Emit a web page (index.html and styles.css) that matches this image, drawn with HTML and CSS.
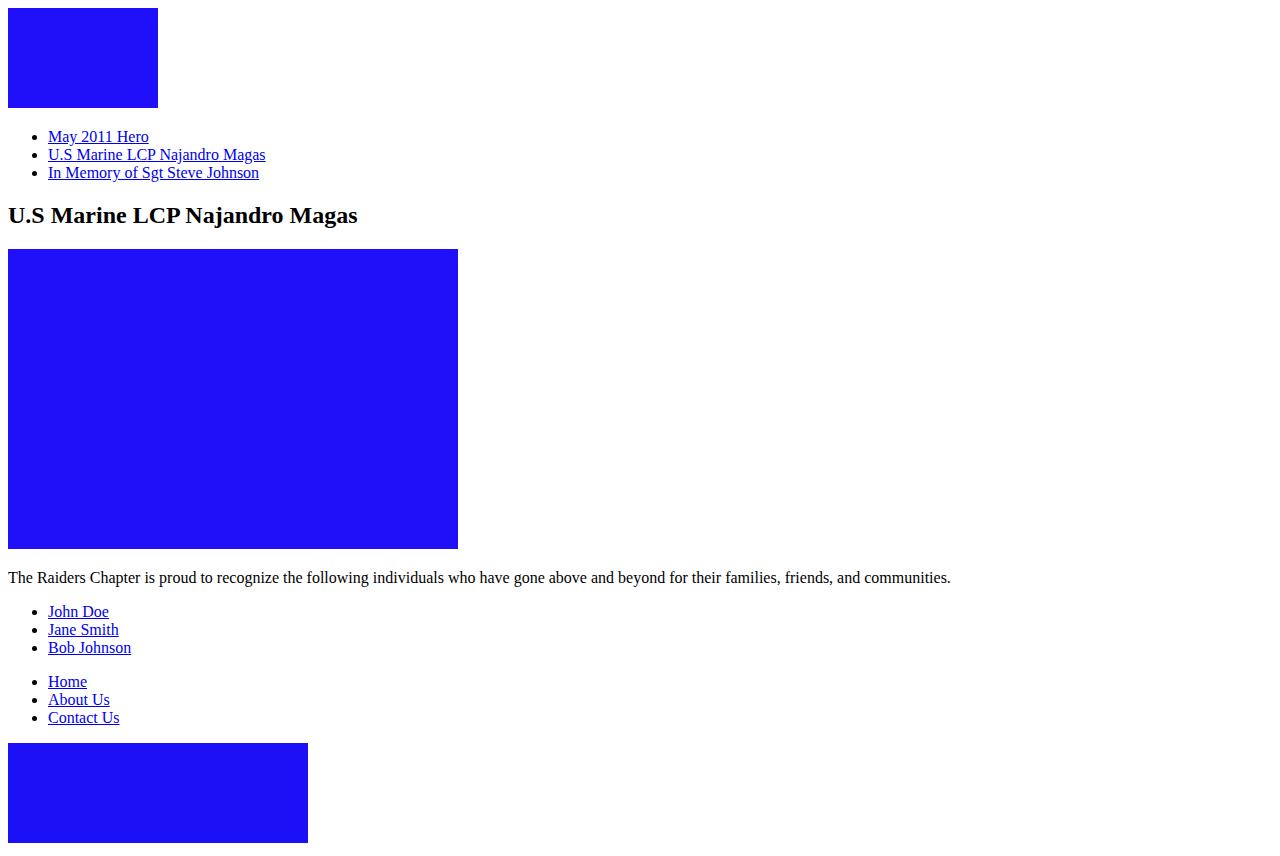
FILE: index.html
```html
<!DOCTYPE html>
<html>
<head>
<meta charset="utf-8">
<title>U.S Marine LCP Najandro Magas</title>
<link rel="stylesheet" href="styles.css">
</head>
<body>
<header class="site-header">
  <div class="media"><span class="logo"></span></div>
  <nav>
    <ul class="list">
      <li><a href="#">May 2011 Hero</a></li>
      <li><a href="#">U.S Marine LCP Najandro Magas</a></li>
      <li><a href="#">In Memory of Sgt Steve Johnson</a></li>
    </ul>
  </nav>
</header>
<main>
  <h2 class="title">U.S Marine LCP Najandro Magas</h2>
  <div class="media"><span class="hero-image"></span></div>
  <p class="intro">The Raiders Chapter is proud to recognize the following individuals who have gone above and beyond for their families, friends, and communities.</p>
  <ul class="list">
    <li><a href="#">John Doe</a></li>
    <li><a href="#">Jane Smith</a></li>
    <li><a href="#">Bob Johnson</a></li>
  </ul>
</main>
<footer>
  <ul class="list">
    <li><a href="#">Home</a></li>
    <li><a href="#">About Us</a></li>
    <li><a href="#">Contact Us</a></li>
  </ul>
  <div class="media"><span class="footer-image"></span></div>
</footer>
</body>
</html>
```
FILE: styles.css
```css
body {
  margin: 8px;
  font-family: "Liberation Serif", "Times New Roman", serif;
  font-size: 16px;
  color: #000;
}
a {
  color: #0000ee;
}
.media {
  margin: 0;
}
.logo,
.hero-image,
.footer-image {
  display: inline-block;
  vertical-align: baseline;
}
.logo {
  width: 150px;
  height: 100px;
  background: #1f10f9;
}
.list {
  margin: 16px 0;
  padding-left: 40px;
}
.title {
  font-size: 24px;
  font-weight: bold;
  margin: 19.92px 0;
}
.hero-image {
  width: 450px;
  height: 300px;
  background: #1f10f9;
}
.intro {
  margin: 16px 0;
}
.footer-image {
  width: 300px;
  height: 100px;
  background: #1c10f6;
}
```
